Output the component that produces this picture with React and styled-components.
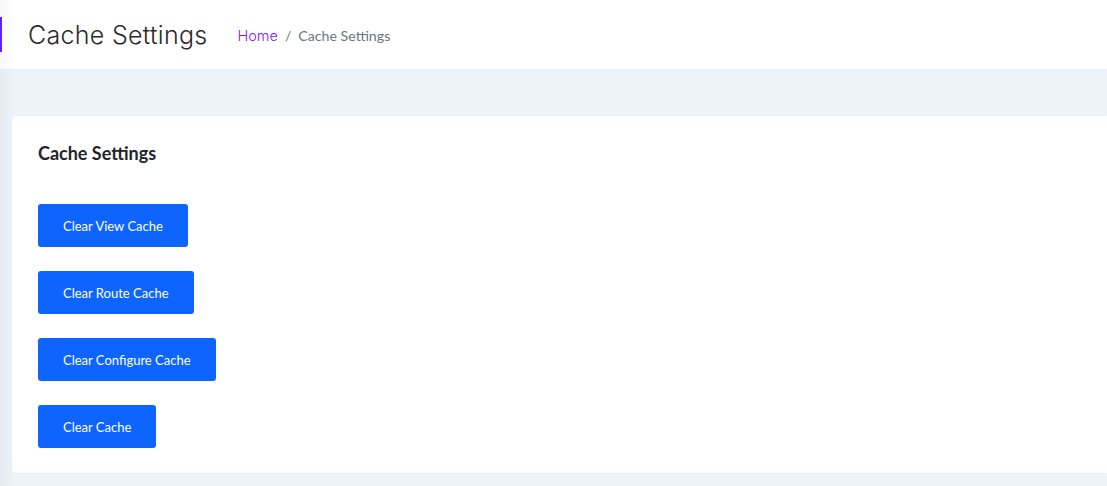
import styled, { createGlobalStyle } from "styled-components";

const GlobalStyle = createGlobalStyle`
  html, body {
    margin: 0;
    padding: 0;
    background: #eef3f7;
    font-family: "Lato", "Liberation Sans", sans-serif;
  }
  * {
    box-sizing: border-box;
  }
`;

const Page = styled.div`
  min-height: 486px;
  background: #eef3f7;
  box-shadow: inset 18px 0 14px -12px rgba(0, 0, 0, 0.04);
`;

const Header = styled.header`
  position: relative;
  display: flex;
  align-items: center;
  gap: 30px;
  height: 69px;
  padding: 0 0 0 28px;
  background: #fff;
  box-shadow: inset 18px 0 14px -12px rgba(0, 0, 0, 0.04);
  &::before {
    content: "";
    position: absolute;
    left: 0;
    top: 17px;
    width: 2px;
    height: 35px;
    background: #5b21ff;
  }
`;

const PageTitle = styled.h1`
  margin: 0;
  font-family: "Inter", "Noto Sans", sans-serif;
  font-weight: 300;
  font-size: 25px;
  letter-spacing: 0.3px;
  color: #2b2b2b;
`;

const Breadcrumb = styled.nav`
  display: flex;
  align-items: center;
  gap: 7px;
  padding-top: 2px;
  font-size: 14px;
  color: #6c757d;
`;

const Crumb = styled.a`
  font-family: ${(p) => (p.$active ? '"Lato", sans-serif' : '"Inter", sans-serif')};
  font-weight: ${(p) => (p.$active ? 400 : 300)};
  font-size: ${(p) => (p.$active ? "14.2px" : "14.5px")};
  color: ${(p) => (p.$active ? "#6c757d" : "#7a16ff")};
  text-decoration: none;
`;

const Content = styled.main`
  padding: 47px 0 14px 12px;
`;

const Card = styled.section`
  display: flex;
  flex-direction: column;
  align-items: flex-start;
  gap: 24px;
  padding: 26px 26px 25px;
  background: #fff;
  border-radius: 4px 0 0 4px;
  box-shadow: 0 0 2px rgba(0, 0, 0, 0.03);
`;

const CardTitle = styled.h2`
  margin: 0 0 16px;
  font-size: 18px;
  font-weight: 700;
  color: #212529;
  line-height: 22px;
`;

const Button = styled.button`
  height: 43px;
  padding: 0 25px;
  border: none;
  border-radius: 3px;
  background: #0d64ff;
  color: #fff;
  font-family: "Lato", "Liberation Sans", sans-serif;
  font-size: 13px;
  cursor: pointer;
`;

const actions = [
  "Clear View Cache",
  "Clear Route Cache",
  "Clear Configure Cache",
  "Clear Cache",
];

export default function App() {
  return (
    <>
      <GlobalStyle />
      <Page>
        <Header>
          <PageTitle>Cache Settings</PageTitle>
          <Breadcrumb>
            <Crumb href="#">Home</Crumb>
            <span>/</span>
            <Crumb $active>Cache Settings</Crumb>
          </Breadcrumb>
        </Header>
        <Content>
          <Card>
            <CardTitle>Cache Settings</CardTitle>
            {actions.map((label) => (
              <Button key={label}>{label}</Button>
            ))}
          </Card>
        </Content>
      </Page>
    </>
  );
}
